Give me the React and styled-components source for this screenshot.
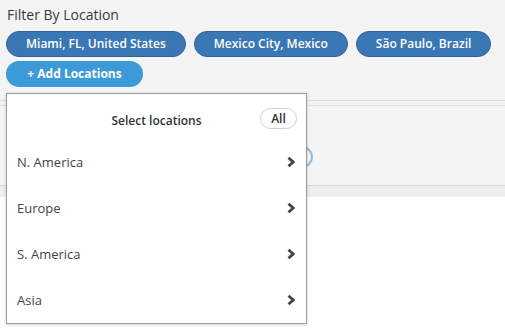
import React from "react";
import styled, { createGlobalStyle } from "styled-components";

const Global = createGlobalStyle`
  html, body { margin: 0; padding: 0; background: #ffffff; }
  body { font-family: "Open Sans", "Noto Sans", Arial, sans-serif; }
  * { box-sizing: border-box; }
`;

const Page = styled.div`
  width: 505px;
  height: 335px;
  overflow: hidden;
  background: #ffffff;
`;

const FilterSection = styled.section`
  background: #f4f4f4;
  padding: 5px 6px 0 6px;
  height: 101px;
  border-bottom: 1px solid #dedede;
`;

const Title = styled.div`
  font-size: 14px;
  line-height: 19px;
  color: #3a3a3a;
  padding-left: 1px;
`;

const ChipRow = styled.div`
  display: flex;
  gap: 8px;
  margin-top: 7px;
`;

const Chip = styled.button`
  height: 26px;
  padding: 0 19px;
  border-radius: 13px;
  border: 1px solid #2d6197;
  background: #3a77b5;
  color: #ffffff;
  font-family: inherit;
  font-size: 12px;
  font-weight: 600;
  line-height: 24px;
  white-space: nowrap;
  cursor: pointer;
`;

const AddWrap = styled.div`
  position: relative;
  margin-top: 4px;
`;

const AddButton = styled.button`
  height: 26px;
  width: 137px;
  border-radius: 13px;
  border: none;
  background: #3c9ad8;
  color: #ffffff;
  font-family: inherit;
  font-size: 12px;
  font-weight: 700;
  line-height: 26px;
  padding: 0;
  cursor: pointer;
`;

const Dropdown = styled.div`
  position: absolute;
  top: 32px;
  left: 0;
  width: 301px;
  background: #ffffff;
  border: 1px solid #9b9b9b;
  box-shadow: 0 1px 3px rgba(0, 0, 0, 0.18);
  z-index: 10;
`;

const DropHeader = styled.div`
  height: 45px;
  padding: 7px 9px 0 10px;
  display: flex;
  align-items: center;
  justify-content: space-between;
  position: relative;
`;

const HeaderTitle = styled.div`
  position: absolute;
  left: 0;
  right: 0;
  top: 7px;
  bottom: 0;
  display: flex;
  align-items: center;
  justify-content: center;
  font-size: 12px;
  font-weight: 600;
  color: #333;
  pointer-events: none;
`;

const AllPill = styled.button`
  margin-left: auto;
  width: 37px;
  height: 21px;
  border: 1px solid #cfcfcf;
  border-radius: 11px;
  background: #ffffff;
  font-family: inherit;
  font-size: 12px;
  font-weight: 600;
  color: #333;
  padding: 0;
  line-height: 19px;
  margin-top: -4px;
`;

const RegionRow = styled.div`
  height: 46px;
  display: flex;
  align-items: center;
  justify-content: space-between;
  padding: 0 10px 0 10px;
  font-size: 13px;
  color: #444;
`;

const Divider = styled.div`
  height: 5px;
  background: #f4f4f4;
  border-bottom: 1px solid #e0e0e0;
`;

const Panel = styled.section`
  height: 80px;
  background: #f4f4f4;
  border-bottom: 1px solid #d9d9d9;
  padding: 40px 0 0 213px;
`;

const GhostPill = styled.div`
  width: 100px;
  height: 22px;
  border: 2px solid #8dbde3;
  border-radius: 11px;
`;

const FooterBand = styled.div`
  height: 11px;
  background: #ededed;
`;

const Chevron = () => (
  <svg width="10" height="12" viewBox="0 0 10 12">
    <polyline
      points="2.5,1.8 7.2,6 2.5,10.2"
      fill="none"
      stroke="#444"
      strokeWidth="2.8"
      strokeLinecap="butt"
      strokeLinejoin="miter"
    />
  </svg>
);

const chips = ["Miami, FL, United States", "Mexico City, Mexico", "São Paulo, Brazil"];
const regions = ["N. America", "Europe", "S. America", "Asia"];

export default function App() {
  return (
    <Page>
      <Global />
      <FilterSection>
        <Title>Filter By Location</Title>
        <ChipRow>
          {chips.map((c) => (
            <Chip key={c}>{c}</Chip>
          ))}
        </ChipRow>
        <AddWrap>
          <AddButton>+ Add Locations</AddButton>
          <Dropdown>
            <DropHeader>
              <HeaderTitle>Select locations</HeaderTitle>
              <AllPill>All</AllPill>
            </DropHeader>
            {regions.map((r) => (
              <RegionRow key={r}>
                <span>{r}</span>
                <Chevron />
              </RegionRow>
            ))}
          </Dropdown>
        </AddWrap>
      </FilterSection>
      <Divider />
      <Panel>
        <GhostPill />
      </Panel>
      <FooterBand />
    </Page>
  );
}
